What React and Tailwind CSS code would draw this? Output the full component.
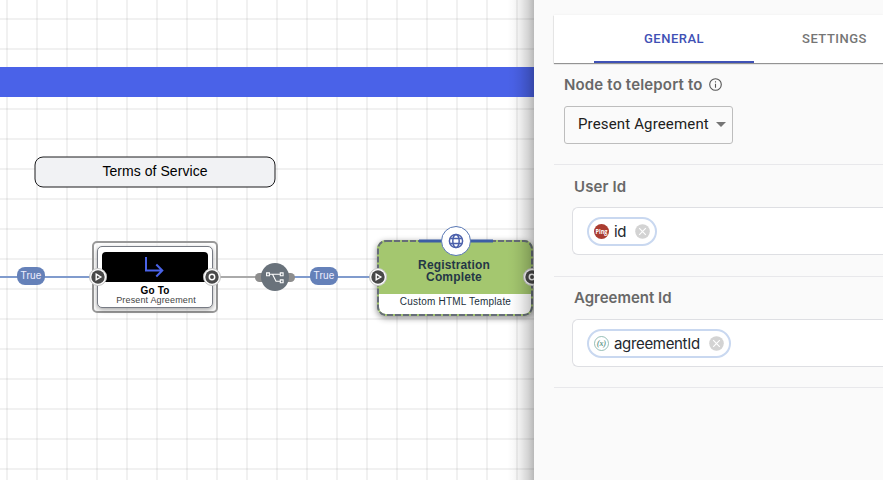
import React from "react";

function Port({ className, kind }) {
  return (
    <svg className={`absolute ${className}`} width="18" height="18" viewBox="0 0 18 18" fill="none">
      <circle cx="9" cy="9" r="8.9" fill="#fff" />
      <circle cx="9" cy="9" r="6.7" fill="#494949" />
      <circle cx="9" cy="9" r="8.5" stroke="#888" strokeWidth=".5" />
      {kind === "in" ? (
        <path d="M7.2 6.2 11.8 9 7.2 11.8Z" stroke="#fff" strokeWidth="1.4" />
      ) : (
        <circle cx="9" cy="9" r="2.7" stroke="#fff" strokeWidth="1.5" />
      )}
    </svg>
  );
}

function TrueLabel({ className }) {
  return (
    <div className={`absolute flex h-[18px] w-7 items-center justify-center rounded-[8px] bg-[#6581b9] font-['Liberation_Sans',sans-serif] text-[10px] leading-none tracking-[0.2px] text-[#eef] ${className}`}>
      True
    </div>
  );
}

function GoToNode() {
  return (
    <div className="absolute left-[92px] top-[241px] h-[72px] w-[126px] rounded-[5px] border-2 border-[#999] bg-white/60 p-[3px]">
      <div className="flex h-full flex-col rounded-[5px] border border-[#777b84] bg-white px-1 pt-[5px] font-['Liberation_Sans',sans-serif] shadow-[0_2px_5px_rgba(0,0,0,0.35)]">
        <div className="flex h-[30px] shrink-0 items-center justify-center rounded-t-[4px] bg-black">
          <svg className="mr-[3px]" width="20" height="22" viewBox="0 0 20 22" fill="none" stroke="#4a63e8" strokeWidth="2">
            <path d="M2 1V14.5H18M12.3 8.5 18.3 14.5 12.3 20.5" />
          </svg>
        </div>
        <div className="mt-[4px] text-center text-[10px] font-bold leading-[10px] tracking-[0.15px] text-black">Go To</div>
        <div className="ml-[2px] whitespace-nowrap text-center text-[9px] leading-[9px] tracking-[0.15px] text-[#444]">Present Agreement</div>
      </div>
    </div>
  );
}

function RegistrationNode() {
  return (
    <div className="absolute left-[377px] top-[240px] h-[76px] w-[156px] rounded-[9px] shadow-[0_2px_6px_rgba(0,0,0,0.45)]">
      <div className="flex h-full flex-col overflow-hidden rounded-[9px] bg-white text-center font-['Liberation_Sans',sans-serif]">
        <div className="h-[54px] shrink-0 bg-[#a4c76f] pr-[2px] pt-[19px] text-[12px] font-bold leading-[12px] tracking-[0.15px] text-[#253746]">
          <div className="h-3">Registration</div>
          <div className="h-3">Complete</div>
        </div>
        <div className="pl-px pt-[2px] text-[10px] leading-[12px] tracking-[0.2px] text-[#22303c]">Custom HTML Template</div>
      </div>
      <svg className="absolute inset-0 overflow-visible" width="156" height="76" viewBox="0 0 156 76" fill="none">
        <rect x="1" y="1" width="154" height="74" rx="8" stroke="#a4c76f" strokeWidth="2" />
        <rect x="1" y="1" width="154" height="74" rx="8" stroke="#666d78" strokeWidth="2" strokeDasharray="6 2" />
        <path d="M42 1H116" stroke="#3c5ea5" strokeWidth="3" />
        <circle cx="79" cy="1" r="14.5" fill="#fff" stroke="#5877b4" />
      </svg>
      <svg className="absolute left-[71px] top-[-7px]" width="16" height="16" viewBox="0 0 16 16" fill="none" stroke="#4a5fab" strokeWidth="1.5">
        <circle cx="8" cy="8" r="6.6" />
        <ellipse cx="8" cy="8" rx="3.2" ry="6.6" />
        <path d="M2.2 5.6H13.8M2.2 10.4H13.8" />
      </svg>
    </div>
  );
}

function Canvas() {
  return (
    <div className="relative h-full w-[534px] shrink-0 overflow-hidden bg-white bg-[linear-gradient(to_right,rgba(0,0,0,0.055)_2px,transparent_2px),linear-gradient(to_bottom,rgba(0,0,0,0.055)_2px,transparent_2px)] bg-[length:30px_30px] bg-[position:6px_18px]">
      <div className="absolute left-0 top-[67px] h-[30px] w-full bg-[#4a62e8]" />
      <div className="absolute left-[34px] top-[156px] flex h-8 w-[242px] items-center justify-center pb-px font-['Liberation_Sans',sans-serif] text-[14px] tracking-[0.05px] text-black">
        <svg className="absolute inset-0" width="242" height="32" viewBox="0 0 242 32">
          <rect x="1" y="1" width="240" height="30" rx="8" fill="#f1f2f4" stroke="#1b1b1d" />
        </svg>
        <span className="relative">Terms of Service</span>
      </div>
      <div className="absolute left-0 top-[276px] h-[2px] w-[92px] bg-[#809bcd]" />
      <div className="absolute left-[218px] top-[276px] h-[2px] w-[40px] bg-[#aaa]" />
      <div className="absolute left-[290px] top-[276px] h-[2px] w-[80px] bg-[#809bcd]" />
      <TrueLabel className="left-[17px] top-[267px]" />
      <TrueLabel className="left-[310px] top-[267px]" />
      <GoToNode />
      <Port kind="in" className="left-[89px] top-[268px]" />
      <Port kind="out" className="left-[203px] top-[268px]" />
      <svg className="absolute left-[255px] top-[263px]" width="40" height="28" viewBox="0 0 40 28" fill="none">
        <rect x="0" y="10" width="40" height="9" rx="4.5" fill="#8d8d8d" />
        <circle cx="20" cy="14" r="14" fill="#69727b" />
        <g stroke="#fff" strokeWidth="1.1">
          <path d="M11.6 9.9h2.8v2.8h-2.8zM25.3 9.9h2.8v2.8h-2.8zM25.3 16.9h2.8v2.8h-2.8z" />
          <path d="M14.4 11.3H25.3M17.5 11.3 21 18.3H25.3" />
        </g>
      </svg>
      <RegistrationNode />
      <Port kind="in" className="left-[369px] top-[268px]" />
      <Port kind="out" className="left-[523px] top-[268px]" />
      <div className="absolute right-0 top-0 h-full w-[27px] bg-[linear-gradient(to_left,rgba(0,0,0,0.28),rgba(0,0,0,0.17)_22%,rgba(0,0,0,0.075)_50%,rgba(0,0,0,0.02)_78%,transparent)]" />
    </div>
  );
}

function Chip({ icon, textClass, children }) {
  return (
    <div className="flex h-[29px] items-center rounded-full border-2 border-[#c9d8f0] px-[5px]">
      {icon}
      <span className={`ml-[5px] mr-[9px] font-[Inter,sans-serif] text-[15px] leading-none text-[#23282e] ${textClass}`}>{children}</span>
      <svg width="15" height="15" viewBox="0 0 15 15">
        <circle cx="7.5" cy="7.5" r="7.3" fill="#d3d3d3" />
        <path d="m4.2 4.2 6.6 6.6m0-6.6-6.6 6.6" stroke="#fff" strokeWidth="1.1" />
      </svg>
    </div>
  );
}

function Field({ label, icon, value, className, labelClass, textClass }) {
  return (
    <section className={`border-t border-[#e8e8eb] ${className}`}>
      <div className={`ml-5 font-[Inter,sans-serif] text-[15px] font-semibold leading-5 text-[#686868] ${labelClass}`}>{label}</div>
      <div className="ml-[18px] flex h-12 items-center rounded-l-[6px] border border-r-0 border-[#dedfe3] bg-white pl-[14px]">
        <Chip icon={icon} textClass={textClass}>{value}</Chip>
      </div>
    </section>
  );
}

const pingIcon = (
  <svg width="15" height="15" viewBox="0 0 15 15">
    <circle cx="7.5" cy="7.5" r="7.5" fill="#aa3c30" />
    <text x="7.5" y="9.5" textAnchor="middle" textLength="12" lengthAdjust="spacingAndGlyphs" fontFamily="Open Sans, sans-serif" fontSize="6.5" fontWeight="700" fill="#fff">Ping</text>
  </svg>
);

const variableIcon = (
  <svg width="15" height="15" viewBox="0 0 15 15">
    <circle cx="7.5" cy="7.5" r="7" fill="#fff" stroke="#7cafa5" strokeWidth=".8" />
    <text x="7.5" y="9.9" textAnchor="middle" fontFamily="Liberation Serif, serif" fontSize="8" fontWeight="700" fontStyle="italic" fill="#64988e">(x)</text>
  </svg>
);

export default function App() {
  return (
    <div className="flex h-[480px] w-[883px] overflow-hidden bg-[#fafafa]">
      <Canvas />
      <aside className="min-w-0 flex-1 pl-5 pt-[15px]">
        <div className="flex h-12 bg-white pl-10 font-[Roboto,sans-serif] text-[13px] font-medium tracking-[0.5px] shadow-[0_1px_1px_rgba(0,0,0,0.4),0_0_2px_rgba(0,0,0,0.06)]">
          <div className="flex w-40 shrink-0 items-center justify-center border-b-2 border-[#3f51b5] pt-[2px] text-[#3f51b5]">GENERAL</div>
          <div className="flex w-40 shrink-0 items-center justify-center pl-px text-[#757575]">SETTINGS</div>
        </div>
        <div className="ml-[10px] mt-[12px] flex h-5 items-center gap-[6px] font-[Inter,sans-serif] text-[15px] font-semibold leading-5 tracking-[0.16px] text-[#686868]">
          <span>Node to teleport to</span>
          <svg className="mb-px" width="13" height="13" viewBox="0 0 13 13" fill="none" stroke="#555" strokeWidth="1.1">
            <circle cx="6.5" cy="6.5" r="5.8" />
            <path d="M6.5 5.7V9.8M6.5 3.2V4.5" />
          </svg>
        </div>
        <div className="ml-[10px] mt-[11px] flex h-[38px] w-[169px] items-center justify-between rounded-[3px] border border-[#bdbdbd] pb-[2px] pl-[13px] pr-[6px] font-[Roboto,sans-serif] text-[15px] tracking-[0.15px] text-[#202020]">
          <span>Present Agreement</span>
          <svg className="mt-px" width="10" height="5" viewBox="0 0 10 5">
            <path d="M0 0H10L5 5Z" fill="#757575" />
          </svg>
        </div>
        <div className="mt-5 flex flex-col items-stretch">
          <Field label="User Id" icon={pingIcon} value="id" className="h-[112px]" labelClass="mb-[10px] mt-3 tracking-[0.1px]" textClass="tracking-[-0.3px]" />
          <Field label="Agreement Id" icon={variableIcon} value="agreementId" className="h-[111px]" labelClass="mb-[11px] mt-[11px]" textClass="tracking-[-0.33px]" />
          <div className="h-px bg-[#e8e8eb]" />
        </div>
      </aside>
    </div>
  );
}
